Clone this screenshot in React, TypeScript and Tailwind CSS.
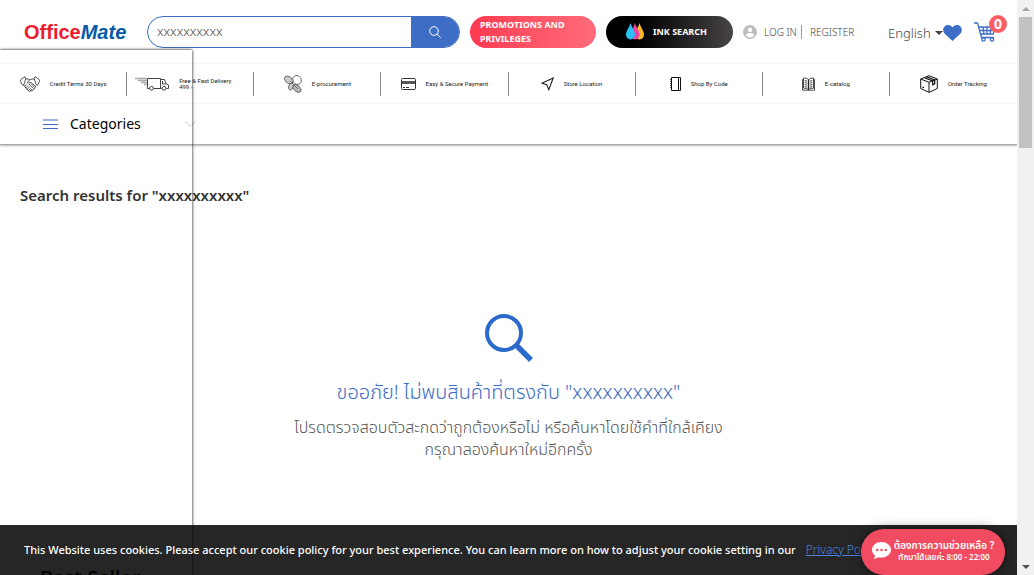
import React from "react";

const sans = "font-['Noto_Sans','Noto_Sans_Thai',sans-serif]";

function Handshake() {
  return (
    <svg className="h-4 w-5 shrink-0" viewBox="0 0 20 16" fill="none" stroke="#333" strokeWidth=".8">
      <path d="M5 .7 1 3.2l-.6 2 2 4L4 8.600 5.800 2.500zM15 .7l4 2.500.6 2-2 4-1.600-.6-1.800-6.100z" />
      <path d="M5.600 3h3l1.400.8L12 3h2.400M10 3.800 7 6.400c.8 1.200 2 .8 3-.2l1 .2 4.600 4M3.600 9l3.800 5 2.200 1.300 2.400-.5 2.400-1.800 1.400-3" />
      <path d="m4.500 10.500 2-2M5.800 12l2.400-2.500M7 13.500l2.500-2.800M8.700 14.700l2-2.500M9 8l4.500 4.700M11 7.500l3.700 4M10.500 15l1.500-2" />
    </svg>
  );
}

function Truck() {
  return (
    <svg className="h-[14px] w-[34px] shrink-0" viewBox="0 0 34 14" fill="none" stroke="#444" strokeWidth="1">
      <path d="M0 1.500h12M3 3.500h9M6 5.500h6M9 7.500h3" stroke="#aaa" strokeWidth="1.400" />
      <path d="M14.500 11.500h-2v-10h13v10h-7M25.500 2.500h4l1.500 4 2.500 1.500v3.500h-2M27.500 4v3H31M25.500 11.500h1.500" />
      <circle cx="16.500" cy="11.300" r="1.900" />
      <circle cx="29" cy="11.300" r="1.900" />
    </svg>
  );
}

function Clover() {
  return (
    <svg className="h-[18px] w-[18px] shrink-0" viewBox="0 0 18 18" stroke="#555" strokeWidth=".8">
      <ellipse cx="13" cy="5" rx="4.200" ry="4.600" fill="#fff" transform="rotate(-35 13 5)" />
      <ellipse cx="4.700" cy="5" rx="4.800" ry="3.200" fill="#ccc" transform="rotate(40 4.700 5)" />
      <ellipse cx="7" cy="11.500" rx="2.200" ry="3.600" fill="#ccc" transform="rotate(20 7 11.500)" />
      <ellipse cx="13" cy="13.500" rx="4.700" ry="3" fill="#bbb" transform="rotate(42 13 13.500)" />
      <path d="m6 6 8 8" />
    </svg>
  );
}

function Card() {
  return (
    <svg className="h-3 w-[15px] shrink-0" viewBox="0 0 15 12" fill="none" stroke="#333">
      <rect x=".5" y=".5" width="14" height="11" rx="1" />
      <path d="M1 4.500h13" strokeWidth="3" stroke="#555" />
      <path d="M2 9.500h2M5 9.500h3" />
    </svg>
  );
}

function Arrow() {
  return (
    <svg className="h-[14px] w-[13px] shrink-0" viewBox="0 0 13 14" fill="none" stroke="#222" strokeWidth="1.100">
      <path d="M12.200 1 7.800 12.700 5.800 7.800.8 6.200z" />
    </svg>
  );
}

function Notebook() {
  return (
    <svg className="h-[14px] w-[11px] shrink-0" viewBox="0 0 11 14" fill="none" stroke="#111">
      <path d="M1.500.5h9v13h-9zM8.500.5v13" />
      <path d="M0 2.500h2M0 4.500h2M0 6.500h2M0 8.500h2M0 10.500h2" strokeWidth=".7" />
    </svg>
  );
}

function Book() {
  return (
    <svg className="h-[14px] w-[13px] shrink-0" viewBox="0 0 13 14" fill="none" stroke="#222" strokeWidth=".8">
      <path d="M6.500 2.500C5 1.300 3.500 1 1.500 1v10.200c2 0 3.500.3 5 1.600 1.500-1.300 3-1.600 5-1.600V1c-2 0-3.500.3-5 1.500zM1.500 2.500H.5v10.700h12V2.500h-1" />
      <path d="M6.500 2.500v10.300" strokeWidth="1.300" />
      <path d="m2.700 3.500 2.500.7M2.700 5.500l2.500.7M2.700 7.500l2.500.7M2.700 9.500l2.500.7M10.300 3.500l-2.500.7M10.300 5.500l-2.500.7M10.300 7.500l-2.500.7M10.300 9.500l-2.500.7" />
    </svg>
  );
}

function Box() {
  return (
    <svg className="h-[18px] w-[18px] shrink-0" viewBox="0 0 18 18" fill="none" stroke="#111" strokeWidth="1">
      <path d="M9 .7 17.300 4v9.500L9 17.400.7 13.500V4zM.7 4 9 7.300 17.300 4M9 7.300v10" />
      <path d="m4.500 2.700 8.200 3.200v4l2-1V5L6.500 1.800" strokeWidth="1.200" />
      <path d="m2.500 12 1.500.7" strokeWidth="1.300" />
    </svg>
  );
}

const services: { label: string; icon: React.ReactNode }[] = [
  { label: "Credit Terms 30 Days", icon: <Handshake /> },
  { label: "Free & Fast Delivery 499.-", icon: <Truck /> },
  { label: "E-procurement", icon: <Clover /> },
  { label: "Easy & Secure Payment", icon: <Card /> },
  { label: "Store Location", icon: <Arrow /> },
  { label: "Shop By Code", icon: <Notebook /> },
  { label: "E-catalog", icon: <Book /> },
  { label: "Order Tracking", icon: <Box /> },
];

function Header() {
  return (
    <div className="flex h-16 items-center border-b border-[#f5f5f5] pr-5 pl-6 text-[#444]">
      <a
        href="#home"
        className="w-[123px] shrink-0 font-['Liberation_Sans',sans-serif] text-[20px] leading-6 font-bold text-[#ed1c2e]"
      >
        Office<i className="text-[#0659a9]">Mate</i>
      </a>
      <form className="flex h-8 min-w-0 flex-1 overflow-hidden rounded-full border border-[#3d6dc4]">
        <input
          aria-label="Search"
          defaultValue="xxxxxxxxxx"
          className="min-w-0 flex-1 pl-[9px] text-[13px] font-light outline-none"
        />
        <button type="button" aria-label="Submit search" className="flex w-12 items-center justify-center bg-[#3d6dc4]">
          <svg className="h-3 w-3" viewBox="0 0 12 12" fill="none" stroke="#fff">
            <circle cx="5" cy="5" r="4.300" />
            <path d="m8 8 3.700 3.700" />
          </svg>
        </button>
      </form>
      <a
        href="#promotions"
        className="ml-[10px] flex h-8 w-[126px] shrink-0 items-center rounded-full bg-linear-to-r from-[#ff3850] to-[#ff6b7b] pr-5 pl-[10px] text-[9px] leading-[14px] font-bold text-white"
      >
        PROMOTIONS AND PRIVILEGES
      </a>
      <a
        href="#ink"
        className="ml-[10px] flex h-8 w-[127px] shrink-0 items-center gap-[9px] rounded-full bg-linear-to-r from-black to-[#494546] pl-5 text-[9px] font-bold text-white"
      >
        <svg className="h-[17px] w-[18px]" viewBox="0 0 18 17">
          <path d="M13.500 0c1.500 5 4.500 8 4.500 11.500a4.500 5 0 0 1-9 0C9 8 12 5 13.500 0z" fill="#fdb927" />
          <path d="M9 0c1.500 5 4.500 8 4.500 11.500a4.500 5 0 0 1-9 0C4.500 8 7.500 5 9 0z" fill="#f23ea4" />
          <path d="M4.500 0C6 5 9 8 9 11.500a4.500 5 0 0 1-9 0C0 8 3 5 4.500 0z" fill="#2bc0f5" />
        </svg>
        INK SEARCH
      </a>
      <svg className="ml-[10px] h-[14px] w-[14px] shrink-0" viewBox="0 0 14 14">
        <circle cx="7" cy="7" r="7" fill="#bdbdbd" />
        <circle cx="7" cy="4.900" r="2.200" fill="#fff" />
        <path d="M2.700 10.200C3.500 8.400 5.200 8 7 8s3.500.4 4.300 2.200C10 12 8.500 12.500 7 12.500S4 12 2.700 10.200z" fill="#fff" />
      </svg>
      <a href="#login" className="ml-[7px] w-[38px] shrink-0 border-r border-[#999] text-[10px] leading-[14px] font-light whitespace-nowrap">
        LOG IN
      </a>
      <a href="#register" className="ml-2 w-11 shrink-0 text-[10px] leading-[14px] font-light">
        REGISTER
      </a>
      <button type="button" className="ml-[34px] flex w-[55px] shrink-0 items-center justify-between pt-[3px] text-[13px] leading-5 font-light">
        English
        <svg className="h-1 w-2" viewBox="0 0 8 4">
          <path d="M0 0h8L4 4z" fill="#444" />
        </svg>
      </button>
      <a href="#wishlist" aria-label="Wishlist" className="shrink-0 pt-[2px]">
        <svg className="h-4 w-[19px]" viewBox="0 0 20 17">
          <path d="M10 17 2 9.500C-.5 7-.5 3.500 1.600 1.500 4-.8 7.800-.3 10 2.600 12.200-.3 16-.8 18.400 1.500c2.100 2 2.100 5.500-.4 8z" fill="#3d6dc4" />
        </svg>
      </a>
      <a href="#cart" aria-label="Cart" className="relative ml-3 flex w-[23px] shrink-0">
        <svg className="h-5 w-[23px]" viewBox="0 0 23 20" fill="none" stroke="#3d6dc4" strokeWidth="1.300">
          <path d="M0 1h3.500l4 14.500H20M4.500 5h17l-2.300 7H6.500M5 8.500h15.500M9 5l1 7M13 5v7M17 5l-1 7" />
          <circle cx="9.500" cy="17.500" r="1.700" />
          <circle cx="18" cy="17.500" r="1.700" />
        </svg>
        <span className="absolute -top-[7px] left-[15px] h-[18px] w-[18px] rounded-full bg-[#ff5f62] text-center text-[14px] leading-[18px] font-bold text-white">
          0
        </span>
      </a>
    </div>
  );
}

export default function App() {
  return (
    <div className={"flex h-screen overflow-hidden bg-white " + sans}>
      <div className="relative flex min-w-0 flex-1 flex-col overflow-hidden">
        <header className="border-b border-[#aaa] shadow-[0_1px_2px_#bbb]">
          <Header />
          <nav className="grid h-10 grid-cols-8 items-center border-b border-[#f5f5f5] font-['Roboto',sans-serif]">
            {services.map((s) => (
              <a
                key={s.label}
                href="#service"
                className="flex h-6 items-center justify-center gap-[10px] border-r border-[#888] px-2 text-[6px] leading-[6px] text-[#222] last:border-r-0"
              >
                {s.icon}
                <span>{s.label}</span>
              </a>
            ))}
          </nav>
          <button type="button" className="flex h-10 w-[196px] items-center pb-px pl-[43px] text-[14px] text-black">
            <svg className="h-[10px] w-[15px]" viewBox="0 0 15 10" stroke="#3d6dc4" strokeWidth="1.200">
              <path d="M0 1h15M0 5.500h15M0 9.500h15" />
            </svg>
            <span className="ml-3 leading-5">Categories</span>
            <svg className="ml-auto h-[6px] w-[11px]" viewBox="0 0 11 6" fill="none" stroke="#ccc">
              <path d="m.5.5 5 5 5-5" />
            </svg>
          </button>
        </header>

        <main className="flex flex-1 flex-col">
          <h1 className="mt-[38px] ml-5 text-[15px] leading-6 font-semibold text-[#333]">
            Search results for "xxxxxxxxxx"
          </h1>
          <section className="mt-[107px] flex flex-col items-center text-center">
            <svg className="h-12 w-12" viewBox="0 0 48 48" fill="none" stroke="#2a6acb">
              <circle cx="19" cy="19" r="17" strokeWidth="4" />
              <path d="m31 31 15 15" strokeWidth="5.500" />
            </svg>
            <h2 className="mt-[14px] text-[20px] leading-8 font-light text-[#3d6dc4]">ขออภัย! ไม่พบสินค้าที่ตรงกับ "xxxxxxxxxx"</h2>
            <p className="mt-2 text-[16px] leading-[22px] font-light text-[#555]">
              โปรดตรวจสอบตัวสะกดว่าถูกต้องหรือไม่ หรือค้นหาโดยใช้คำที่ใกล้เคียง
              <br />
              กรุณาลองค้นหาใหม่อีกครั้ง
            </p>
          </section>
          <h2 className="mt-[102px] ml-10 text-[20px] leading-8 font-medium whitespace-nowrap text-black">Best Seller</h2>
        </main>

        <div className="pointer-events-none absolute top-[50px] -bottom-2 left-0 w-48 shadow-[0_0_3px_#000]" />

        <div className="absolute inset-x-0 bottom-0 flex h-[50px] items-center overflow-hidden bg-black/85 pl-6 text-[11px] font-medium whitespace-nowrap text-white">
          <p>
            This Website uses cookies. Please accept our cookie policy for your best experience. You can learn more on how to adjust your cookie setting in our
          </p>
          <a href="#privacy" className="ml-[10px] text-[12px] font-light text-[#4a83dc] underline">
            Privacy Policy
          </a>
        </div>

        <button
          type="button"
          className="absolute right-3 bottom-0 flex h-[46px] w-36 items-center justify-center gap-[3px] rounded-full bg-[#f04b60] pb-[3px] whitespace-nowrap text-white shadow-[0_0_12px_#0008]"
        >
          <svg className="h-[17px] w-[19px]" viewBox="0 0 19 17">
            <path d="M9.500 0C4.300 0 0 3.400 0 7.800c0 2.300 1.200 4.400 3.100 5.800L2 17l5-1.700c.8.200 1.600.3 2.500.3 5.200 0 9.500-3.400 9.500-7.800S14.700 0 9.500 0z" fill="#fff" />
            <g fill="#f04b60">
              <circle cx="5.200" cy="8" r="1.300" />
              <circle cx="9.500" cy="8" r="1.300" />
              <circle cx="13.800" cy="8" r="1.300" />
            </g>
          </svg>
          <span className="flex flex-col text-center font-semibold">
            <span className="text-[10px] leading-3">ต้องการความช่วยเหลือ ?</span>
            <span className="text-[8px] leading-3">ทักมาได้เลยค่ะ 8:00 - 22:00</span>
          </span>
        </button>
      </div>

      <div aria-hidden="true" className="flex w-[17px] shrink-0 flex-col items-center bg-[#f1f1f1]">
        <div className="flex h-[17px] items-center">
          <svg className="h-1 w-2" viewBox="0 0 8 4">
            <path d="M0 4h8L4 0z" fill="#a3a3a3" />
          </svg>
        </div>
        <div className="h-[131px] w-[13px] bg-[#c1c1c1]" />
        <div className="mt-auto flex h-[17px] items-center">
          <svg className="h-1 w-2" viewBox="0 0 8 4">
            <path d="M0 0h8L4 4z" fill="#505050" />
          </svg>
        </div>
      </div>
    </div>
  );
}
